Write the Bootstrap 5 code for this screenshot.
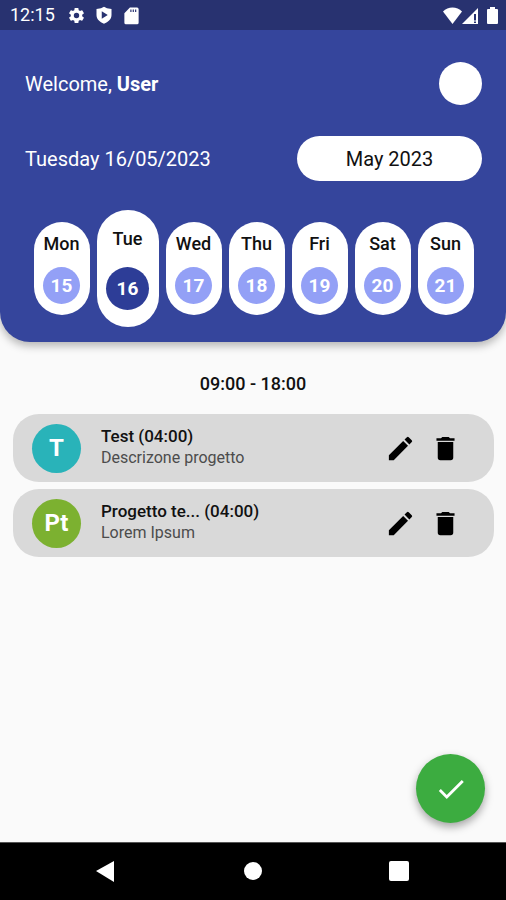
<!DOCTYPE html>
<html lang="en">
<head>
<meta charset="utf-8">
<meta name="viewport" content="width=device-width, initial-scale=1">
<title>Work calendar</title>
<link href="https://cdn.jsdelivr.net/npm/bootstrap@5.3.0/dist/css/bootstrap.min.css" rel="stylesheet">
<style>
  body { font-family: Roboto, "Liberation Sans", sans-serif; background: #fafafa; color: #111; }
  svg { display: block; fill: currentColor; }
  .top-panel { background: #35459c; border-radius: 0 0 30px 30px; box-shadow: 0 4px 8px rgba(0,0,0,.28); font-size: 20px; line-height: 24px; overflow: hidden; }
  .status-bar { background: #283270; height: 30px; font-size: 18px; line-height: 32px; padding: 0 8px 0 10px; }
  .status-icons { margin-left: 12px; gap: 9px; }
  .panel-body { padding: 32px 24px 15px 25px; }
  .avatar-btn { width: 43px; height: 43px; }
  .date-row { margin-top: 31px; }
  .month-btn { width: 185px; height: 45px; font-size: 20px; color: #111; }
  .week { margin: 29px 0 0; gap: 7px; }
  .day { width: 56px; height: 93px; border-radius: 28px; padding: 10px 0 0; font-size: 18px; font-weight: 500; line-height: 24px; color: #111; }
  .day-number { width: 37px; height: 37px; margin-top: 11px; background: #93a0f6; font-size: 19px; font-weight: 700; }
  .day.selected { width: 62px; height: 117px; border-radius: 31px; padding-top: 17px; }
  .selected .day-number { width: 43px; height: 43px; margin-top: 16px; background: #2d3d97; }
  .hours { font-size: 18px; line-height: 24px; font-weight: 500; margin: 30px 0 18px; }
  .entries { padding: 0 12px 0 13px; gap: 7px; }
  .entry { background: #d9d9d9; border-radius: 26px; height: 68px; padding: 0 33px 0 19px; }
  .entry-badge { width: 49px; height: 49px; margin-right: 20px; font-size: 24px; font-weight: 700; }
  .teal-badge { background: #29b3b9; }
  .green-badge { background: #7cb130; }
  .entry-copy { padding-bottom: 3px; }
  .entry-title { font-size: 17px; line-height: 22px; font-weight: 500; }
  .entry-text { font-size: 16px; line-height: 21px; color: #4c4c4c; }
  .entry-actions { gap: 14px; }
  .icon-btn { color: #000; }
  .confirm-btn { width: 69px; height: 69px; margin: 0 21px 19px 0; background: #3cac40; box-shadow: 0 4px 9px rgba(0,0,0,.35); }
  .confirm-btn:hover { background: #349a38; }
  .system-nav { background: #000; height: 58px; border-top: 1px solid #555; gap: 125px; }
</style>
</head>
<body>
<div class="d-flex flex-column min-vh-100">
  <header class="top-panel text-white">
    <div class="status-bar d-flex align-items-center">
      <span>12:15</span>
      <div class="status-icons d-flex align-items-center me-auto">
        <svg width="19" height="19" viewBox="0 0 24 24" aria-hidden="true"><path d="M19.14 12.94c.04-.3.06-.61.06-.94 0-.32-.02-.64-.07-.94l2.03-1.58a.49.49 0 0 0 .12-.61l-1.92-3.32a.49.49 0 0 0-.59-.22l-2.39.96c-.5-.38-1.03-.7-1.62-.94l-.36-2.54a.48.48 0 0 0-.48-.41h-3.84c-.24 0-.43.17-.47.41l-.36 2.54c-.59.24-1.13.57-1.62.94l-2.39-.96a.48.48 0 0 0-.59.22L2.74 8.87c-.12.21-.08.47.12.61l2.03 1.58c-.05.3-.09.63-.09.94s.02.64.07.94l-2.03 1.58a.49.49 0 0 0-.12.61l1.92 3.32c.12.22.37.29.59.22l2.39-.96c.5.38 1.03.7 1.62.94l.36 2.54c.05.24.24.41.48.41h3.84c.24 0 .44-.17.47-.41l.36-2.54c.59-.24 1.13-.56 1.62-.94l2.39.96c.22.08.47 0 .59-.22l1.92-3.32a.48.48 0 0 0-.12-.61l-2.01-1.58zM12 15.4a3.4 3.4 0 1 1 0-6.8 3.4 3.4 0 0 1 0 6.8z"/></svg>
        <svg width="18" height="18" viewBox="0 0 24 24" aria-hidden="true"><path fill-rule="evenodd" d="M12 1 8 3 2 4v8c0 5.500 4.300 9.500 10 11.500 5.700-2 10-6 10-11.500V4l-6-1zM9 7l8 5-8 5z"/></svg>
        <svg width="19" height="19" viewBox="0 0 24 24" aria-hidden="true"><path fill-rule="evenodd" d="M19 2h-9L3 9v12a2 2 0 0 0 2 2h14a2 2 0 0 0 2-2V4a2 2 0 0 0-2-2zM10.500 4.500h1.500v3h-1.500zm3 0H15v3h-1.500zm3 0H18v3h-1.500z"/></svg>
      </div>
      <svg width="19" height="17" viewBox="0 0 19 17" aria-hidden="true"><path d="M0 4.500C5-.8 14-.8 19 4.500L9.500 17z"/></svg>
      <svg width="17" height="17" viewBox="0 0 17 17" aria-hidden="true"><path fill-rule="evenodd" d="M16 1v16H0zM12 7v6.500h2V7zm0 7.500V16h2v-1.500z"/></svg>
      <svg class="ms-2" width="11" height="17" viewBox="0 0 11 17" aria-hidden="true"><path d="M3 0h5v2h2a1 1 0 0 1 1 1v13a1 1 0 0 1-1 1H1a1 1 0 0 1-1-1V3a1 1 0 0 1 1-1h2z"/></svg>
    </div>
    <div class="panel-body">
      <div class="d-flex align-items-center justify-content-between">
        <div>Welcome, <b>User</b></div>
        <button type="button" class="avatar-btn btn bg-white rounded-circle p-0" aria-label="Profile"></button>
      </div>
      <div class="date-row d-flex align-items-center justify-content-between">
        <div>Tuesday 16/05/2023</div>
        <button type="button" class="month-btn btn bg-white rounded-pill p-0">May 2023</button>
      </div>
      <div class="week d-flex align-items-center justify-content-center">
        <button type="button" class="day bg-white border-0 d-flex flex-column align-items-center">Mon<span class="day-number rounded-circle text-white d-flex align-items-center justify-content-center">15</span></button>
        <button type="button" class="day selected bg-white border-0 d-flex flex-column align-items-center" aria-pressed="true">Tue<span class="day-number rounded-circle text-white d-flex align-items-center justify-content-center">16</span></button>
        <button type="button" class="day bg-white border-0 d-flex flex-column align-items-center">Wed<span class="day-number rounded-circle text-white d-flex align-items-center justify-content-center">17</span></button>
        <button type="button" class="day bg-white border-0 d-flex flex-column align-items-center">Thu<span class="day-number rounded-circle text-white d-flex align-items-center justify-content-center">18</span></button>
        <button type="button" class="day bg-white border-0 d-flex flex-column align-items-center">Fri<span class="day-number rounded-circle text-white d-flex align-items-center justify-content-center">19</span></button>
        <button type="button" class="day bg-white border-0 d-flex flex-column align-items-center">Sat<span class="day-number rounded-circle text-white d-flex align-items-center justify-content-center">20</span></button>
        <button type="button" class="day bg-white border-0 d-flex flex-column align-items-center">Sun<span class="day-number rounded-circle text-white d-flex align-items-center justify-content-center">21</span></button>
      </div>
    </div>
  </header>

  <main class="flex-grow-1 d-flex flex-column">
    <h1 class="hours text-center">09:00 - 18:00</h1>
    <ul class="entries list-unstyled d-flex flex-column mb-auto">
      <li class="entry d-flex align-items-center">
        <div class="entry-badge teal-badge rounded-circle text-white d-flex align-items-center justify-content-center">T</div>
        <div class="entry-copy flex-grow-1">
          <div class="entry-title">Test (04:00)</div>
          <div class="entry-text">Descrizone progetto</div>
        </div>
        <div class="entry-actions d-flex">
          <button type="button" class="icon-btn btn p-0 border-0" aria-label="Edit Test"><svg width="31" height="31" viewBox="0 0 24 24"><path d="M3 17.250V21h3.750L17.810 9.940l-3.750-3.750L3 17.250zM20.710 7.040a1 1 0 0 0 0-1.410l-2.340-2.340a1 1 0 0 0-1.410 0l-1.830 1.830 3.750 3.750 1.830-1.830z"/></svg></button>
          <button type="button" class="icon-btn btn p-0 border-0" aria-label="Delete Test"><svg width="31" height="31" viewBox="0 0 24 24"><path d="M6 19a2 2 0 0 0 2 2h8a2 2 0 0 0 2-2V7H6v12zM19 4h-3.500l-1-1h-5l-1 1H5v2h14V4z"/></svg></button>
        </div>
      </li>
      <li class="entry d-flex align-items-center">
        <div class="entry-badge green-badge rounded-circle text-white d-flex align-items-center justify-content-center">Pt</div>
        <div class="entry-copy flex-grow-1">
          <div class="entry-title">Progetto te... (04:00)</div>
          <div class="entry-text">Lorem Ipsum</div>
        </div>
        <div class="entry-actions d-flex">
          <button type="button" class="icon-btn btn p-0 border-0" aria-label="Edit Progetto"><svg width="31" height="31" viewBox="0 0 24 24"><path d="M3 17.250V21h3.750L17.810 9.940l-3.750-3.750L3 17.250zM20.710 7.040a1 1 0 0 0 0-1.410l-2.340-2.340a1 1 0 0 0-1.410 0l-1.830 1.830 3.750 3.750 1.830-1.830z"/></svg></button>
          <button type="button" class="icon-btn btn p-0 border-0" aria-label="Delete Progetto"><svg width="31" height="31" viewBox="0 0 24 24"><path d="M6 19a2 2 0 0 0 2 2h8a2 2 0 0 0 2-2V7H6v12zM19 4h-3.500l-1-1h-5l-1 1H5v2h14V4z"/></svg></button>
        </div>
      </li>
    </ul>
    <button type="button" class="confirm-btn btn rounded-circle border-0 p-0 text-white align-self-end d-flex align-items-center justify-content-center" aria-label="Confirm"><svg width="34" height="34" viewBox="0 0 24 24"><path d="M9 16.170 4.830 12l-1.420 1.410L9 19 21 7l-1.410-1.410z"/></svg></button>
  </main>

  <nav class="system-nav d-flex align-items-center justify-content-center" aria-label="System">
    <button type="button" class="btn p-0 border-0 text-white" aria-label="Back"><svg width="22" height="22" viewBox="0 0 22 22"><path d="M19 0v21L1 10z"/></svg></button>
    <button type="button" class="btn p-0 border-0 text-white" aria-label="Home"><svg width="22" height="22" viewBox="0 0 22 22"><circle cx="11" cy="10" r="9"/></svg></button>
    <button type="button" class="btn p-0 border-0 text-white" aria-label="Recent apps"><svg width="22" height="22" viewBox="0 0 22 22"><rect x="0" y="0" width="20" height="20" rx="2"/></svg></button>
  </nav>
</div>
<script src="https://cdn.jsdelivr.net/npm/bootstrap@5.3.0/dist/js/bootstrap.bundle.min.js"></script>
</body>
</html>
